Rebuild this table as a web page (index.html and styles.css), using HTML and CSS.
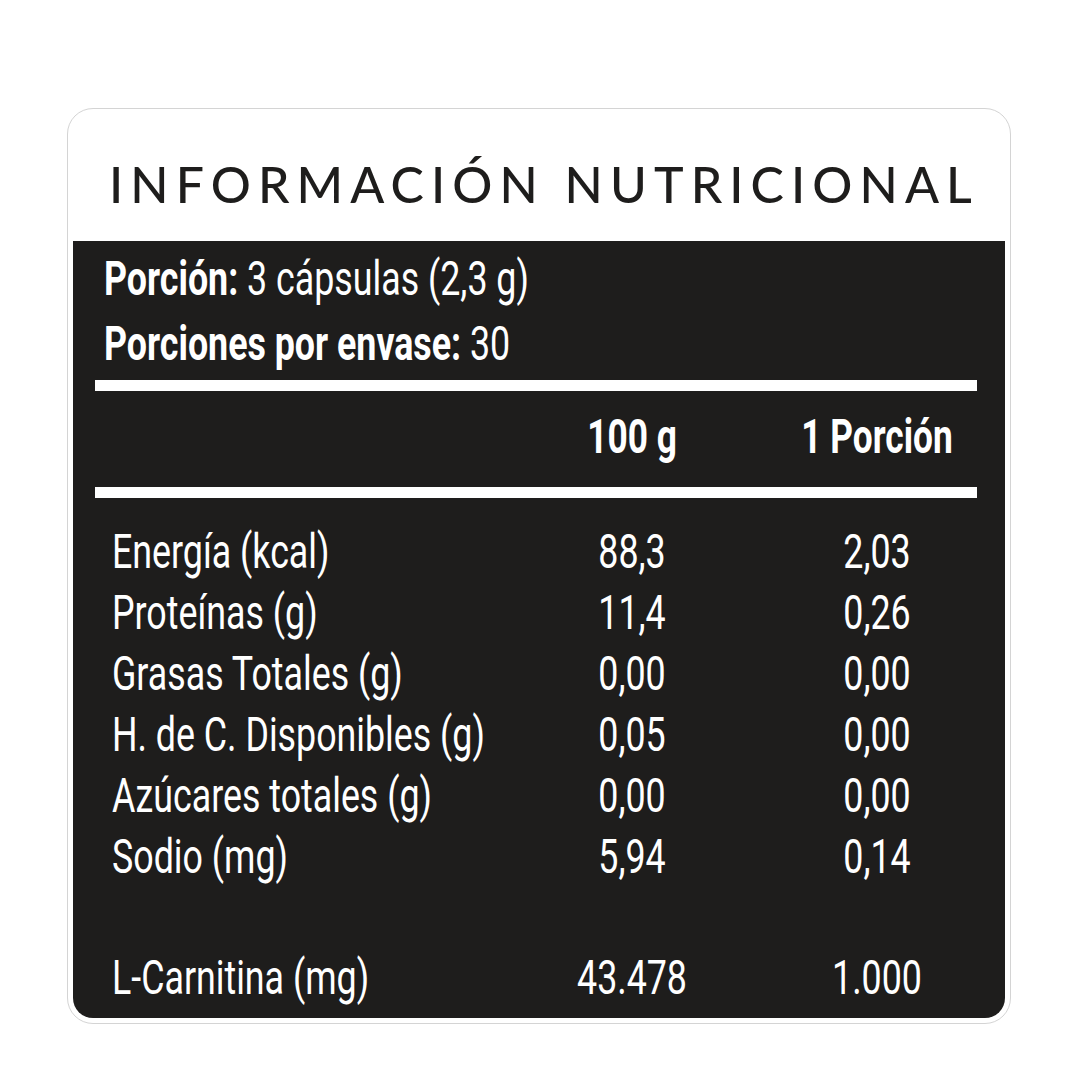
FILE: index.html
```html
<!DOCTYPE html>
<html lang="es">
<head>
    <meta charset="UTF-8">
    <meta name="viewport" content="width=device-width, initial-scale=1.0">
    <title>Información Nutricional</title>
    <link rel="stylesheet" href="styles.css">
</head>
<body>
    <div class="card">
        <h1 class="title">INFORMACIÓN NUTRICIONAL</h1>
        <div class="panel">
            <p class="serving"><b>Porción:</b> 3 cápsulas (2,3 g)</p>
            <p class="serving"><b>Porciones por envase:</b> 30</p>
            <div class="rule"></div>
            <div class="row head"><span></span><span>100 g</span><span>1 Porción</span></div>
            <div class="rule"></div>
            <div class="rows">
                <div class="row"><span>Energía (kcal)</span><span>88,3</span><span>2,03</span></div>
                <div class="row"><span>Proteínas (g)</span><span>11,4</span><span>0,26</span></div>
                <div class="row"><span>Grasas Totales (g)</span><span>0,00</span><span>0,00</span></div>
                <div class="row"><span>H. de C. Disponibles (g)</span><span>0,05</span><span>0,00</span></div>
                <div class="row"><span>Azúcares totales (g)</span><span>0,00</span><span>0,00</span></div>
                <div class="row"><span>Sodio (mg)</span><span>5,94</span><span>0,14</span></div>
                <div class="row extra"><span>L-Carnitina (mg)</span><span>43.478</span><span>1.000</span></div>
            </div>
        </div>
    </div>
</body>
</html>
```

FILE: styles.css
```css
body { margin: 0; padding: 108px 0 0 67px; background: #fff; }
.card { box-sizing: border-box; width: 944px; height: 916px; border: 1px solid #d4d4d4; border-radius: 26px; padding: 0 5px 5px 5px; display: flex; flex-direction: column; }
.title { flex-shrink: 0; margin: 0; height: 132px; box-sizing: border-box; padding: 50px 0 0 36px; font-family: Lato, "Open Sans", sans-serif; font-weight: 500; font-size: 50px; line-height: 1; letter-spacing: 0.142em; color: #1e1d1c; white-space: nowrap; }
.panel { flex: 1; background: #1e1d1c; color: #fff; border-radius: 0 0 20px 20px; padding: 5px 3px 0 22px; font-family: Roboto, "Liberation Sans", sans-serif; font-size: 49px; white-space: nowrap; }
.serving { margin: 0 0 0 9px; line-height: 65px; transform: scaleX(0.73); transform-origin: left center; }
.rule { height: 11px; background: #fff; margin: 4px 25px 0 0; }
.row { display: grid; grid-template-columns: 400px 240px 250px; padding-left: 17px; line-height: 61px; }
.row span { transform: scaleX(0.73); transform-origin: left center; }
.row span + span { text-align: center; transform-origin: center; }
.head { line-height: 92px; font-weight: bold; }
.head span + span { transform: scaleX(0.72); }
.rows { margin-top: 23px; }
.extra { margin-top: 60px; }
```
